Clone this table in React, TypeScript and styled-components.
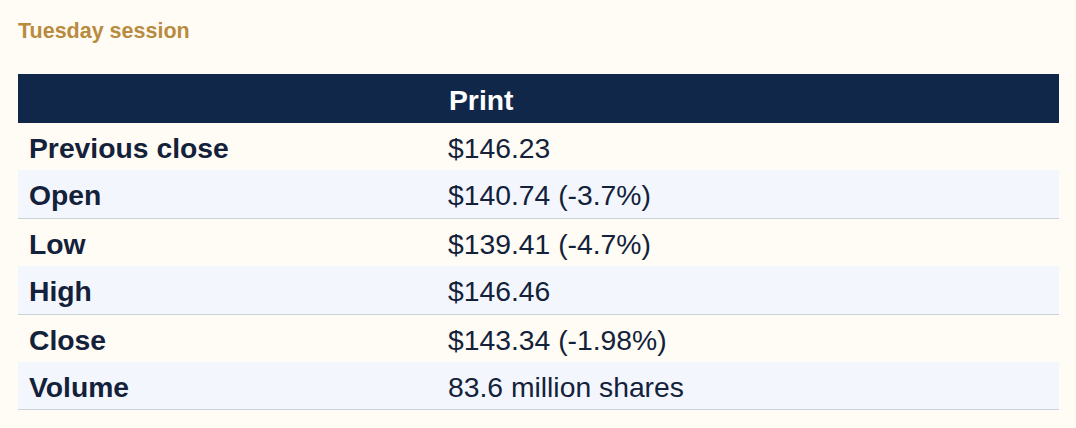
import React from "react";
import styled, { createGlobalStyle } from "styled-components";

const Global = createGlobalStyle`
  html, body { margin: 0; padding: 0; background: #fffcf5; }
  body { font-family: "Liberation Sans", Arial, sans-serif; }
`;

const Page = styled.div`
  padding: 19px 17px 0 18px;
`;

const Title = styled.h2`
  margin: 0 0 31px 0;
  font-size: 21.5px;
  line-height: 24px;
  font-weight: 700;
  color: #b88b3e;
`;

const Table = styled.table`
  width: 100%;
  border-collapse: collapse;
`;

const HeadCell = styled.th`
  background: #11274a;
  color: #ffffff;
  text-align: left;
  font-size: 28.3px;
  font-weight: 700;
  line-height: 32px;
  padding: 10px 11px 7px;
`;

const Row = styled.tr<{ $striped: boolean }>`
  background: ${(p) => (p.$striped ? "#f3f7fd" : "transparent")};
  border-bottom: ${(p) => (p.$striped ? "1px solid #c9d2df" : "0")};
`;

const LabelCell = styled.td`
  width: 398px;
  padding: 9px 11px 6.4px;
  line-height: 32px;
  font-size: 28.3px;
  font-weight: 700;
  color: #13223a;
`;

const ValueCell = styled.td`
  padding: 9px 10px 6.4px;
  line-height: 32px;
  font-size: 28.3px;
  color: #13223a;
`;

const rows: [string, string][] = [
  ["Previous close", "$146.23"],
  ["Open", "$140.74 (-3.7%)"],
  ["Low", "$139.41 (-4.7%)"],
  ["High", "$146.46"],
  ["Close", "$143.34 (-1.98%)"],
  ["Volume", "83.6 million shares"],
];

export default function App() {
  return (
    <Page>
      <Global />
      <Title>Tuesday session</Title>
      <Table>
        <thead>
          <tr>
            <HeadCell />
            <HeadCell>Print</HeadCell>
          </tr>
        </thead>
        <tbody>
          {rows.map(([k, v], i) => (
            <Row key={k} $striped={i % 2 === 1}>
              <LabelCell>{k}</LabelCell>
              <ValueCell>{v}</ValueCell>
            </Row>
          ))}
        </tbody>
      </Table>
    </Page>
  );
}
